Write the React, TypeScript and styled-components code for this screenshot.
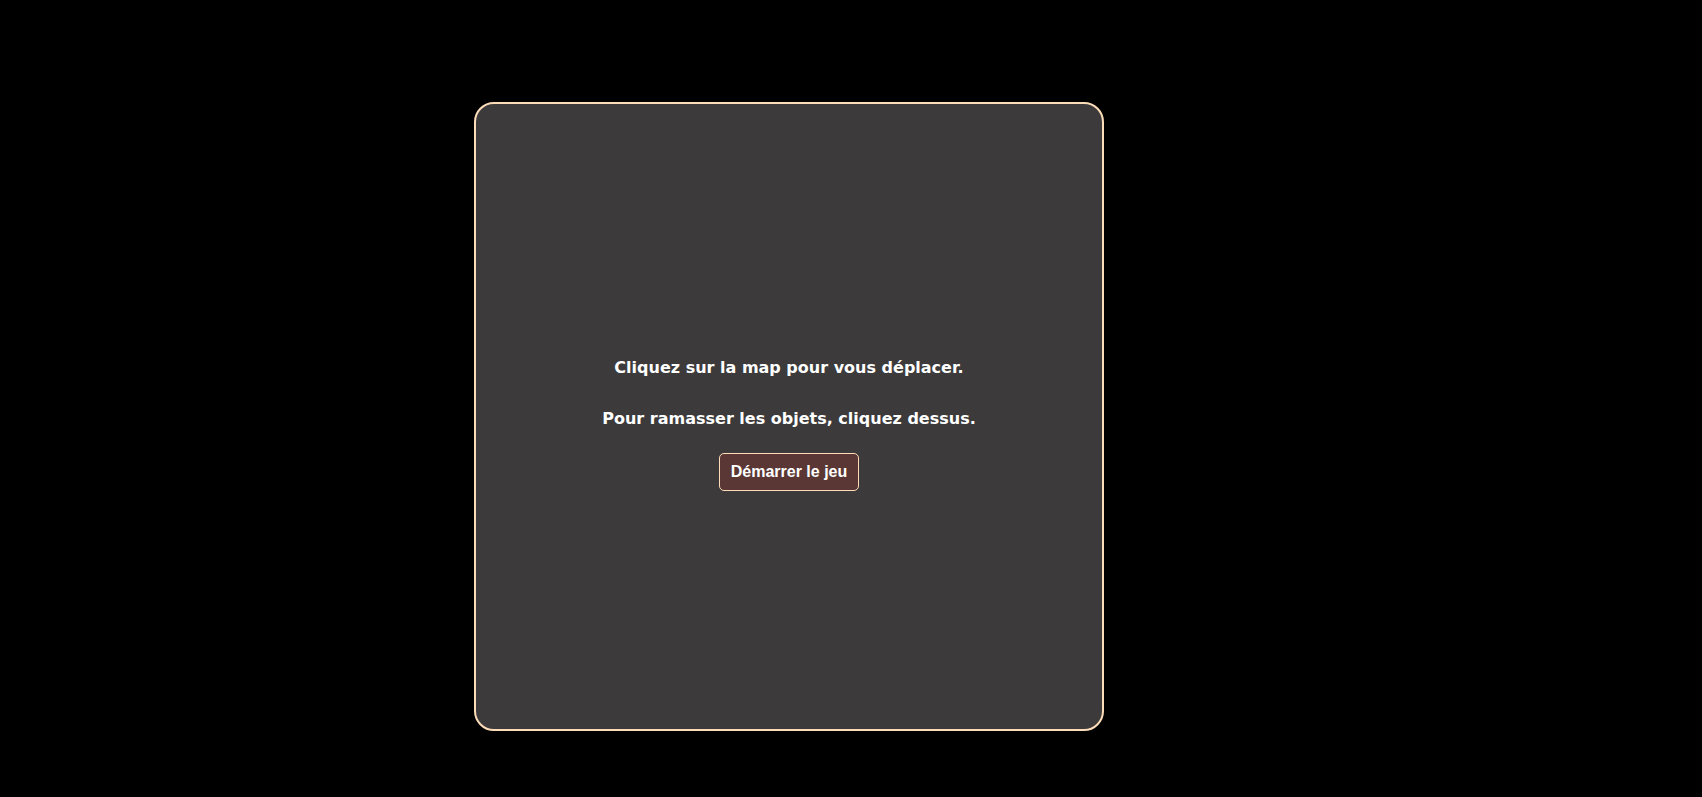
import React from 'react';
import styled, { createGlobalStyle } from 'styled-components';

const GlobalStyle = createGlobalStyle`
	html, body {
		margin: 0;
		padding: 0;
		background-color: #000000;
	}
`;

export default function App() {
	return (
		<>
			<GlobalStyle />
			<Page>
				<GameBoard>
					<Instructions>
						<InstructionText>Cliquez sur la map pour vous déplacer.</InstructionText>
						<InstructionText>Pour ramasser les objets, cliquez dessus.</InstructionText>
					</Instructions>
					<StartButton type="button">Démarrer le jeu</StartButton>
				</GameBoard>
			</Page>
		</>
	);
}

const Page = styled.div`
	display: flex;
	flex-direction: row;
	justify-content: flex-start;
	align-items: flex-start;
	width: 100%;
	min-height: 797px;
	box-sizing: border-box;
	padding: 102px 0 0 474px;
	background-color: #000000;
`;
const GameBoard = styled.div`
	display: flex;
	flex-direction: column;
	justify-content: flex-start;
	align-items: center;
	gap: 25px;

	width: 630px;
	height: 629px;
	box-sizing: border-box;
	padding-top: 254px;
	border: 2px solid #fcdcb9;
	border-radius: 20px;
	background-color: #3c3a3b;
`;
const Instructions = styled.div`
	display: flex;
	flex-direction: column;
	align-items: center;
	gap: 32px;
`;
const InstructionText = styled.p`
	margin: 0;
	font-family: 'DejaVu Sans', Verdana, sans-serif;
	font-size: 16px;
	font-weight: 700;
	line-height: 19px;
	color: #ffffff;
	text-align: center;
`;
const StartButton = styled.button`
	height: 38px;
	padding: 0 11px;
	border: 1px solid #fcdcb9;
	border-radius: 5px;
	background-color: #5a3734;
	color: #ffffff;
	font-family: 'Liberation Sans', Arial, sans-serif;
	font-size: 16px;
	font-weight: 700;
	cursor: pointer;
`;
